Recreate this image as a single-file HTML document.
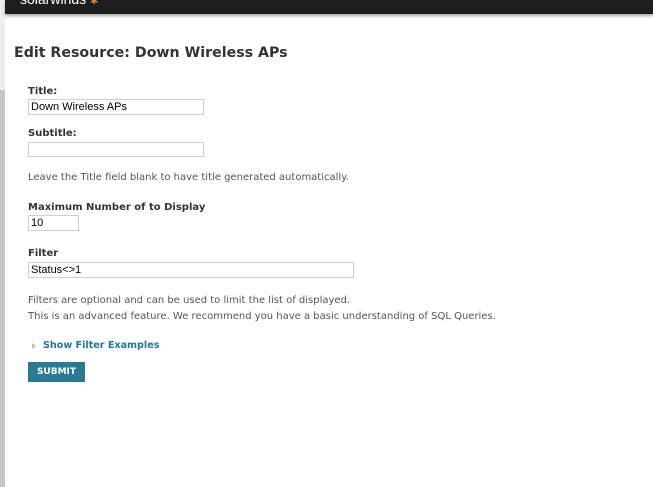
<!DOCTYPE html>
<html><head><style>
*{margin:0;padding:0;box-sizing:border-box}
body{width:653px;height:487px;background:#fff;position:relative;overflow:hidden;font-family:"DejaVu Sans","Liberation Sans",sans-serif;color:#333}
.a{position:absolute;white-space:nowrap}
.lbl{font-weight:bold;font-size:10px;color:#333}
.txt{font-size:10px;color:#555}
.inp{position:absolute;border:1px solid #cfcfcf;background:#fff;font-family:"Liberation Sans",Arial,sans-serif;font-size:11px;color:#000;padding:1px 2px;line-height:13px}
</style></head><body>
<div class="a" style="left:0;top:0;width:5px;height:90px;background:#eeeeee"></div>
<div class="a" style="left:0;top:90px;width:5px;height:397px;background:#c6c6c6"></div>
<div class="a" style="left:5px;top:0;width:648px;height:14px;background:#1e1e1e;box-shadow:0 2px 3px rgba(0,0,0,0.35)"></div>
<div class="a" style="left:20px;top:-9px;font-size:14px;color:#fff;font-family:'Liberation Sans',sans-serif">solarwinds <span style="color:#e8861e;font-size:10px">✱</span></div>
<div class="a" style="left:14px;top:45px;font-size:14.2px;font-weight:bold;color:#333">Edit Resource: Down Wireless APs</div>
<div class="a lbl" style="left:28px;top:86px">Title:</div>
<div class="inp" style="left:28px;top:99px;width:176px;height:16px">Down Wireless APs</div>
<div class="a lbl" style="left:28px;top:128px">Subtitle:</div>
<div class="inp" style="left:28px;top:142px;width:176px;height:15px"></div>
<div class="a txt" style="left:28px;top:172px">Leave the Title field blank to have title generated automatically.</div>
<div class="a lbl" style="left:28px;top:202px">Maximum Number of to Display</div>
<div class="inp" style="left:28px;top:215px;width:51px;height:16px">10</div>
<div class="a lbl" style="left:28px;top:248px">Filter</div>
<div class="inp" style="left:28px;top:262px;width:326px;height:16px">Status&lt;&gt;1</div>
<div class="a txt" style="left:28px;top:295px">Filters are optional and can be used to limit the list of displayed.</div>
<div class="a txt" style="left:28px;top:311px">This is an advanced feature. We recommend you have a basic understanding of SQL Queries.</div>
<div class="a" style="left:32px;top:343px;width:0;height:0;border-left:4px solid #bbb;border-top:3px solid transparent;border-bottom:3px solid transparent"></div>
<div class="a" style="left:43px;top:340px;font-size:9.6px;font-weight:bold;color:#1f74a0">Show Filter Examples</div>
<div class="a" style="left:28px;top:362px;width:57px;height:20px;background:#297a93;color:#fff;font-size:9px;font-weight:bold;text-align:center;line-height:21px">SUBMIT</div>
</body></html>
